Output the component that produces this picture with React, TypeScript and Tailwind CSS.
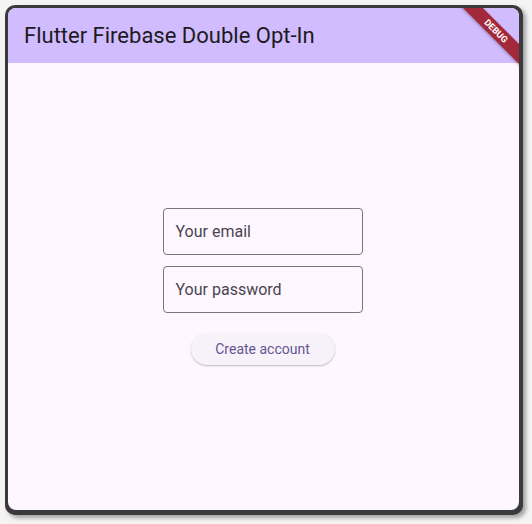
export default function App() {
  const font = { fontFamily: 'Roboto, "Liberation Sans", sans-serif' };

  return (
    <div className="w-[532px] h-[524px] bg-[#f4f4f4] pt-[5px] pl-[5px]" style={font}>
      {/* window frame */}
      <div className="w-[518px] h-[510px] bg-[#3a393c] rounded-[10px] pt-[3px] pl-[3px] pr-[4px] pb-[5px] shadow-[3px_3px_4px_rgba(0,0,0,0.35)]">
        <div className="relative h-full flex flex-col rounded-[8px] overflow-hidden bg-[#fef7ff]">
          {/* app bar */}
          <div className="h-[55px] shrink-0 bg-[#d0bcff] flex items-center pl-4">
            <h1 className="text-[22px] leading-7 text-[#1d1b20] font-normal">Flutter Firebase Double Opt-In</h1>
          </div>

          {/* form */}
          <div className="flex-1 flex flex-col items-center justify-center pr-[2px]">
            <div className="w-[200px] h-[47px] border border-[#79747e] rounded-[4px] flex items-center px-3">
              <span className="text-[16px] text-[#49454f]">Your email</span>
            </div>
            <div className="mt-[11px] w-[200px] h-[47px] border border-[#79747e] rounded-[4px] flex items-center px-3">
              <span className="text-[16px] text-[#49454f]">Your password</span>
            </div>
            <button className="mt-[20px] w-[144px] h-[32px] rounded-full bg-[#f7f2fa] text-[14px] text-[#65558f] shadow-[0_1px_2px_rgba(0,0,0,0.25)]">
              Create account
            </button>
          </div>

          {/* debug banner */}
          <div className="absolute top-0 right-0 w-[70px] h-[70px] overflow-hidden pointer-events-none">
            <div className="absolute top-[16px] right-[-27px] w-[100px] h-[14px] bg-[#a3283a] rotate-45 flex items-center justify-center shadow-[0_1px_3px_rgba(0,0,0,0.3)]">
              <span className="text-[9px] leading-none font-bold text-white">DEBUG</span>
            </div>
          </div>
        </div>
      </div>
    </div>
  );
}
